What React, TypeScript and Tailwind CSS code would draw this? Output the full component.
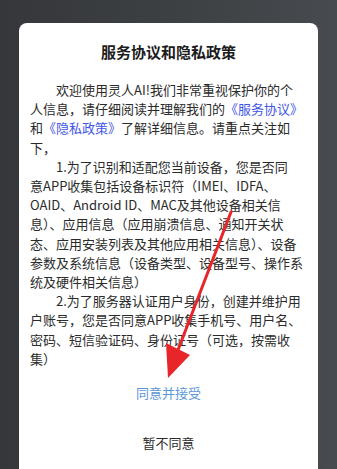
const font = {
  fontFamily: '"Noto Sans CJK SC", "Noto Sans", sans-serif',
};

function Link({ children }: { children: React.ReactNode }) {
  return <span className="text-[#3f55e8]">{children}</span>;
}

export default function App() {
  return (
    <div
      className="relative h-[469px] w-[337px] overflow-hidden bg-gradient-to-r from-[#35373a] via-[#3d4043] to-[#474a4e]"
      style={font}
    >
      <div className="mx-[19px] mt-[23px] h-[460px] rounded-[8px] bg-white px-[11px] pt-[19px]">
        <h1 className="text-center text-[15px] font-bold leading-[20px] text-[#1c1c1c]">
          服务协议和隐私政策
        </h1>

        <div className="mt-[18px] whitespace-nowrap text-[13px] leading-[19.2px] text-[#2b2b2b]">
          <p className="indent-[2em]">
            欢迎使用灵人AI!我们非常重视保护你的个
            <br />
            人信息，请仔细阅读并理解我们的<Link>《服务协议》</Link>
            <br />和<Link>《隐私政策》</Link>了解详细信息。请重点关注如
            <br />
            下，
          </p>
          <p className="indent-[2em]">
            1.为了识别和适配您当前设备，您是否同
            <br />
            意APP收集包括设备标识符（IMEI、IDFA、
            <br />
            OAID、Android ID、MAC及其他设备相关信
            <br />
            息）、应用信息（应用崩溃信息、通知开关状
            <br />
            态、应用安装列表及其他应用相关信息）、设备
            <br />
            参数及系统信息（设备类型、设备型号、操作系
            <br />
            统及硬件相关信息）
          </p>
          <p className="indent-[2em]">
            2.为了服务器认证用户身份，创建并维护用
            <br />
            户账号，您是否同意APP收集手机号、用户名、
            <br />
            密码、短信验证码、身份证号（可选，按需收
            <br />
            集）
          </p>
        </div>

        <div className="flex flex-col">
          <button className="h-[50px] text-center text-[13px] text-[#5b97d6]">
            同意并接受
          </button>
          <button className="h-[50px] text-center text-[13px] text-[#2b2b2b]">
            暂不同意
          </button>
        </div>
      </div>

      {/* red annotation arrow */}
      <svg
        className="pointer-events-none absolute inset-0"
        width="337"
        height="469"
        viewBox="0 0 337 469"
      >
        <line
          x1="231"
          y1="212"
          x2="178"
          y2="350"
          stroke="#e8262a"
          strokeWidth="3"
          strokeLinecap="round"
        />
        <polygon points="166,343 190,355 168,378" fill="#e8262a" />
      </svg>
    </div>
  );
}
